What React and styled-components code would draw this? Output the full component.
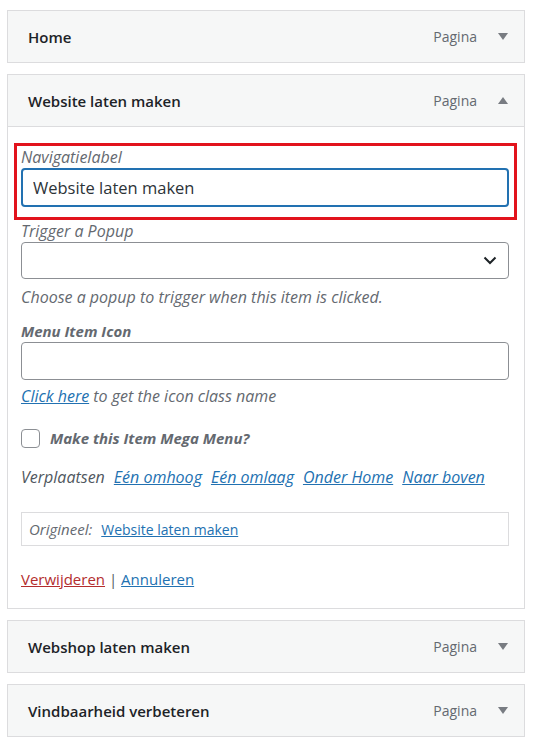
import React from 'react';
import styled, { createGlobalStyle } from 'styled-components';

const GlobalStyle = createGlobalStyle`
  body {
    margin: 0;
    background: #ffffff;
    font-family: "Open Sans", "Noto Sans", sans-serif;
    color: #3c434a;
  }
`;

const items = [
  { title: 'Home', open: false },
  { title: 'Website laten maken', open: true },
  { title: 'Webshop laten maken', open: false },
  { title: 'Vindbaarheid verbeteren', open: false },
];

function Arrow({ up }) {
  return (
    <svg width="10" height="7" viewBox="0 0 10 7">
      <path d={up ? 'M0 7 L5 0 L10 7 Z' : 'M0 0 L5 7 L10 0 Z'} fill="#787c82" />
    </svg>
  );
}

function ItemSettings() {
  return (
    <Body>
      <Highlight>
        <Label>Navigatielabel</Label>
        <TextInput focused defaultValue="Website laten maken" />
      </Highlight>
      <Label>Trigger a Popup</Label>
      <SelectBox>
        <svg width="14" height="9" viewBox="0 0 14 9">
          <path d="M1.5 1.5 L7 7 L12.5 1.5" stroke="#1d2327" strokeWidth="2" fill="none" />
        </svg>
      </SelectBox>
      <Hint>Choose a popup to trigger when this item is clicked.</Hint>
      <Label bold>Menu Item Icon</Label>
      <TextInput />
      <Hint tight>
        <Link href="#">Click here</Link> to get the icon class name
      </Hint>
      <CheckRow>
        <CheckBox />
        <CheckLabel>Make this Item Mega Menu?</CheckLabel>
      </CheckRow>
      <MoveRow>
        <span>Verplaatsen</span>
        <Link href="#">Eén omhoog</Link>
        <Link href="#">Eén omlaag</Link>
        <Link href="#">Onder Home</Link>
        <Link href="#">Naar boven</Link>
      </MoveRow>
      <Original>
        <em>Origineel:</em>
        <Link href="#">Website laten maken</Link>
      </Original>
      <Actions>
        <Link href="#" danger>Verwijderen</Link> | <Link href="#">Annuleren</Link>
      </Actions>
    </Body>
  );
}

export default function App() {
  return (
    <>
      <GlobalStyle />
      <MenuList>
        {items.map((item) => (
          <Card key={item.title}>
            <Header>
              <Title>{item.title}</Title>
              <Type>Pagina</Type>
              <Arrow up={item.open} />
            </Header>
            {item.open && <ItemSettings />}
          </Card>
        ))}
      </MenuList>
    </>
  );
}

const MenuList = styled.div`
  display: flex;
  flex-direction: column;
  gap: 11px;
  width: 518px;
  padding: 10px 0 0 7px;
`;

const Card = styled.div`
  border: 1px solid #dcdcde;
  background: #ffffff;
`;

const Header = styled.div`
  display: flex;
  align-items: center;
  height: 51px;
  padding: 0 16px 0 20px;
  background: #f6f7f7;
`;

const Title = styled.div`
  flex: 1;
  font-size: 15px;
  font-weight: 600;
  color: #1d2327;
`;

const Type = styled.span`
  font-size: 14px;
  color: #646970;
  margin-right: 21px;
`;

const Body = styled.div`
  display: flex;
  flex-direction: column;
  border-top: 1px solid #dcdcde;
  padding: 16px 15px 18px 13px;
`;

const Highlight = styled.div`
  display: flex;
  flex-direction: column;
  border: 3px solid #e2131c;
  margin: 0 -8px 0 -7px;
  padding: 0 5px 10px 4px;
`;

const Label = styled.label`
  font-size: ${(p) => (p.bold ? '15px' : '16px')};
  font-style: italic;
  font-weight: ${(p) => (p.bold ? 700 : 400)};
  color: #646970;
  line-height: 22px;
`;

const TextInput = styled.input`
  box-sizing: border-box;
  height: ${(p) => (p.focused ? '39px' : '38px')};
  width: 100%;
  padding: 0 10px;
  font-family: inherit;
  font-size: 16.5px;
  color: #2c3338;
  border-radius: 4px;
  outline: none;
  border: ${(p) => (p.focused ? '2px solid #2271b1' : '1px solid #8c8f94')};
  background: #ffffff;
`;

const SelectBox = styled.div`
  box-sizing: border-box;
  display: flex;
  align-items: center;
  justify-content: flex-end;
  height: 37px;
  padding-right: 11px;
  border: 1px solid #8c8f94;
  border-radius: 4px;
`;

const Hint = styled.p`
  margin: ${(p) => (p.tight ? '5px 0 0' : '7px 0 12px')};
  font-size: 16px;
  font-style: italic;
  color: #646970;
  line-height: 22px;
`;

const Link = styled.a`
  color: ${(p) => (p.danger ? '#b32d2e' : '#2271b1')};
  text-decoration: underline;
  font-style: inherit;
`;

const CheckRow = styled.div`
  display: flex;
  align-items: center;
  gap: 10px;
  height: 22px;
  margin-top: 20px;
`;

const CheckBox = styled.span`
  box-sizing: border-box;
  width: 19px;
  height: 19px;
  border: 1px solid #8c8f94;
  border-radius: 4px;
`;

const CheckLabel = styled.span`
  font-size: 15px;
  font-style: italic;
  font-weight: 700;
  color: #646970;
`;

const MoveRow = styled.div`
  display: flex;
  gap: 9px;
  margin-top: 17px;
  font-size: 16px;
  font-style: italic;
  color: #50575e;
  line-height: 22px;
`;

const Original = styled.div`
  display: flex;
  gap: 9px;
  align-items: center;
  height: 32px;
  margin-top: 24px;
  padding: 0 7px;
  border: 1px solid #dcdcde;
  font-size: 14px;
  color: #646970;

  em {
    font-size: 15px;
  }
`;

const Actions = styled.div`
  margin-top: 22px;
  font-size: 15px;
  line-height: 22px;
  color: #50575e;
`;
